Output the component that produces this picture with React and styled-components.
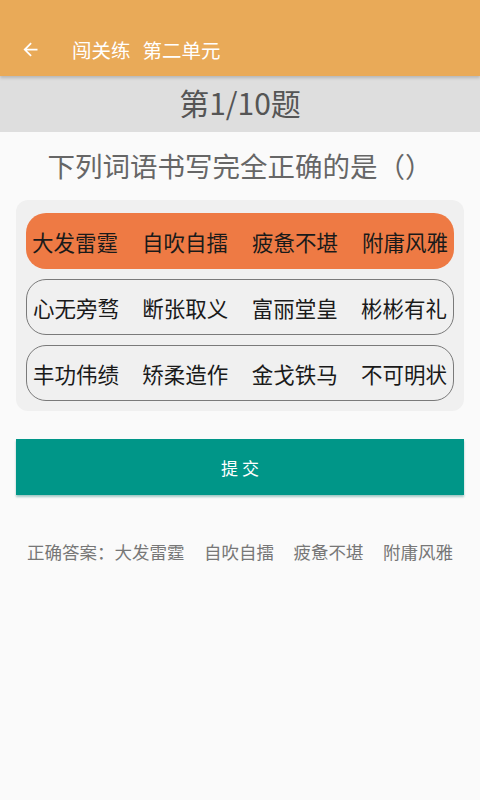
import React from 'react'
import styled, { createGlobalStyle } from 'styled-components'

const GlobalStyle = createGlobalStyle`
  html, body {
    margin: 0;
    padding: 0;
    background: #fafafa;
    font-family: "Noto Sans CJK SC", "Noto Sans", Roboto, sans-serif;
  }
`

const options = [
  ['大发雷霆', '自吹自擂', '疲惫不堪', '附庸风雅'],
  ['心无旁骛', '断张取义', '富丽堂皇', '彬彬有礼'],
  ['丰功伟绩', '矫柔造作', '金戈铁马', '不可明状'],
]

const App = () => {
  return (
    <Page>
      <GlobalStyle />
      <Toolbar>
        <BackIcon viewBox="0 0 24 24">
          <path d="M20 11H7.83l5.59-5.59L12 4l-8 8 8 8 1.41-1.41L7.83 13H20v-2z" fill="#fff" />
        </BackIcon>
        <Title>
          闯关练<Gap />第二单元
        </Title>
      </Toolbar>
      <Progress>第1/10题</Progress>
      <Question>下列词语书写完全正确的是（）</Question>
      <OptionPanel>
        {options.map((row, i) => (
          <OptionRow key={i} selected={i === 0}>
            {row.map(word => (
              <span key={word}>{word}</span>
            ))}
          </OptionRow>
        ))}
      </OptionPanel>
      <SubmitButton>提 交</SubmitButton>
      <Answer>
        <span>正确答案：大发雷霆</span>
        <span>自吹自擂</span>
        <span>疲惫不堪</span>
        <span>附庸风雅</span>
      </Answer>
    </Page>
  )
}

export default App

const Page = styled.div`
  width: 480px;
  min-height: 800px;
  background: #fafafa;
  display: flex;
  flex-direction: column;
`

const Toolbar = styled.div`
  height: 76px;
  background: #e9aa58;
  display: flex;
  align-items: flex-end;
  padding: 0 0 12px 18px;
  box-sizing: border-box;
  box-shadow: 0 2px 3px rgba(0, 0, 0, 0.18);
  position: relative;
  z-index: 1;
`

const BackIcon = styled.svg`
  width: 21px;
  height: 21px;
  margin: 0 0 4px 2px;
`

const Title = styled.div`
  margin-left: 31px;
  color: #fff;
  font-size: 19.5px;
  line-height: 28px;
  display: flex;
  align-items: center;
`

const Gap = styled.span`
  width: 12px;
`

const Progress = styled.div`
  height: 56px;
  background: #dedede;
  color: #555;
  font-size: 30px;
  display: flex;
  align-items: center;
  justify-content: center;
  padding-bottom: 4px;
  box-sizing: border-box;
`

const Question = styled.div`
  margin-top: 13px;
  text-align: center;
  color: #666;
  font-size: 27.5px;
  line-height: 40px;
`

const OptionPanel = styled.div`
  margin: 15px 16px 0;
  background: #f0f0f0;
  border-radius: 12px;
  padding: 13px 10px 10px;
  display: flex;
  flex-direction: column;
  gap: 10px;
`

const OptionRow = styled.div`
  height: 56px;
  box-sizing: border-box;
  border-radius: 20px;
  border: ${p => (p.selected ? 'none' : '1.5px solid #7a7a7a')};
  background: ${p => (p.selected ? '#ee7a44' : 'transparent')};
  color: #1a1a1a;
  font-size: 21.5px;
  display: flex;
  align-items: center;
  justify-content: space-between;
  padding: 0 6px;
`

const SubmitButton = styled.div`
  margin: 28px 16px 0;
  height: 56px;
  background: #009688;
  color: #fff;
  font-size: 17px;
  display: flex;
  align-items: center;
  justify-content: center;
  box-shadow: 0 2px 2px rgba(0, 110, 100, 0.35);
`

const Answer = styled.div`
  margin: 44px 27px 0;
  color: #777;
  font-size: 17.5px;
  display: flex;
  justify-content: space-between;
`
